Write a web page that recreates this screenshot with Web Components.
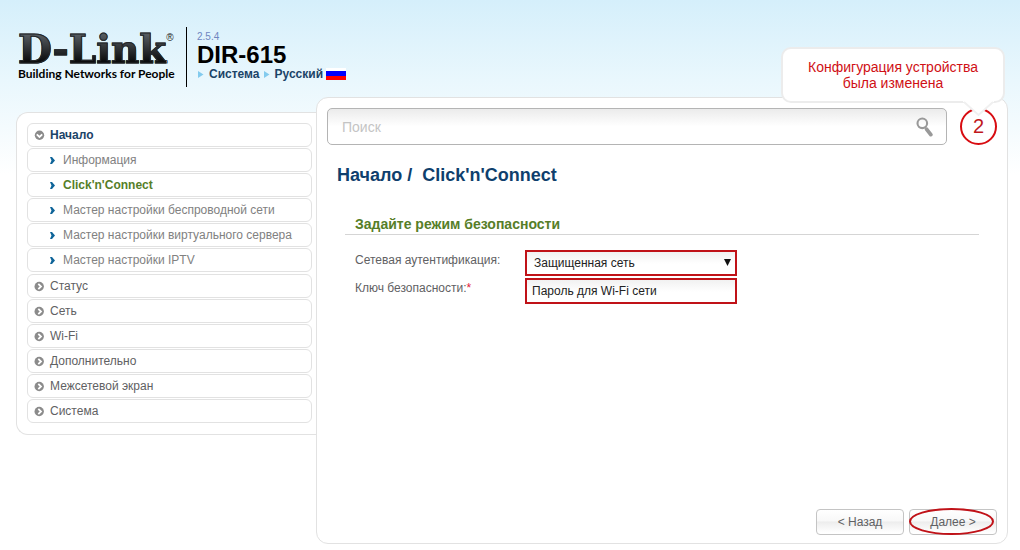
<!DOCTYPE html>
<html lang="ru">
<head>
<meta charset="utf-8">
<title>DIR-615</title>
<style>
html{height:100%}
body{margin:0;min-height:100%;display:flex;flex-direction:column;font:12px/16px "Liberation Sans",Arial,sans-serif;color:#5f6163;background:linear-gradient(#d5effb 0,#e9f7fd 80px,#fff 175px) no-repeat #fff}
</style>
</head>
<body>
<router-app></router-app>
<script>
const define=(name,html,init)=>{
  const t=document.createElement('template');
  t.innerHTML=html;
  customElements.define(name,class extends HTMLElement{
    constructor(){
      super();
      this.attachShadow({mode:'open'}).append(t.content.cloneNode(true));
    }
    connectedCallback(){ if(init) init(this,this.shadowRoot); }
  });
};

define('brand-logo',`
<style>
:host{display:block;width:156px;padding-top:5px;color:#000}
.name{display:flex;font:bold 39px/34px "DejaVu Serif",serif;white-space:nowrap}
.name b{background:linear-gradient(#54595e 10%,#0c0d0e 85%);-webkit-background-clip:text;background-clip:text;color:transparent;-webkit-text-stroke:1px #222528}
sup{font:10px/12px "Liberation Sans",sans-serif;color:#222}
.tag{font:bold 12px/15px Lato,sans-serif;white-space:nowrap}
</style>
<div class="name"><b>D-Link</b><sup>®</sup></div>
<div class="tag">Building Networks for People</div>`);

define('crumb-link',`
<style>
:host{display:flex;align-items:center;gap:5px}
svg{width:7px;height:9px}
a{color:#1b4468;font-weight:bold;text-decoration:none}
</style>
<svg viewBox="0 0 7 9"><path d="M1 1 6.500 4.500 1 8z" fill="#83cbee"/></svg><a href="#"><slot></slot></a>`);

define('ru-flag',`
<style>
:host{display:block;width:20px;height:12px;background:linear-gradient(#fff 25%,#00f 25% 67%,#f00 67%)}
</style>`);

define('app-header',`
<style>
:host{display:flex;gap:12px;padding:27px 18px 0;height:60px}
.info{border-left:1px solid #000;padding-left:10px;color:#000}
.ver{font-size:10px;line-height:14px;padding-top:3px;color:#6f86c0}
h1{margin:0;font-size:24px;line-height:22px}
nav{display:flex;align-items:center;gap:3px}
</style>
<brand-logo></brand-logo>
<div class="info"><div class="ver">2.5.4</div><h1>DIR-615</h1>
<nav><crumb-link>Система</crumb-link><crumb-link>Русский</crumb-link><ru-flag></ru-flag></nav></div>`);

define('menu-item',`
<style>
:host{display:block}
a{display:flex;align-items:center;gap:5px;box-sizing:border-box;height:24px;padding-left:6px;border:1px solid #e2e2e2;border-radius:6px;background:#fff;color:#5f6163;text-decoration:none;white-space:nowrap}
svg{width:11px;height:11px}
.sub{display:none}
:host([level="2"]) a{padding-left:19px;color:#818181}
:host([level="2"]) .top{display:none}
:host([level="2"]) .sub{display:block}
:host([open]) a{color:#1b4468;font-weight:bold}
:host([open]) svg{transform:rotate(90deg)}
:host([current]) a{color:#567e28;font-weight:bold}
</style>
<a href="#"><svg class="top" viewBox="0 0 11 11"><circle cx="5.200" cy="5.500" r="4.700" fill="#8b8b8b"/><path d="M4.300 2.800 7 5.500 4.300 8.200" fill="none" stroke="#fff" stroke-width="1.800"/></svg><svg class="sub" viewBox="0 0 11 11"><path d="M3 2h2l3 3.500-3 3.500H3l1.500-3.500z" fill="#0e6499"/></svg><slot></slot></a>`);

define('side-menu',`
<style>
:host{display:block}
nav{padding:10px 4px 11px 10px;border:1px solid #e2e2e2;border-right:0;border-radius:12px 0 0 12px;background:#fff;display:grid;gap:1px}
.group{display:grid;gap:1px;padding-bottom:1px}
</style>
<nav><div class="group">
<menu-item open>Начало</menu-item>
<menu-item level="2">Информация</menu-item>
<menu-item level="2" current>Click'n'Connect</menu-item>
<menu-item level="2">Мастер настройки беспроводной сети</menu-item>
<menu-item level="2">Мастер настройки виртуального сервера</menu-item>
<menu-item level="2">Мастер настройки IPTV</menu-item></div>
<menu-item>Статус</menu-item><menu-item>Сеть</menu-item><menu-item>Wi-Fi</menu-item>
<menu-item>Дополнительно</menu-item><menu-item>Межсетевой экран</menu-item><menu-item>Система</menu-item>
</nav>`);

define('search-box',`
<style>
:host{display:flex;flex:1;align-items:center;box-sizing:border-box;height:37px;padding:0 12px 0 14px;border:1px solid #b4b4b4;border-radius:5px;background:linear-gradient(#ebebeb,#fff 50%)}
input{flex:1;min-width:0;border:0;padding:0;outline:0;background:none;font:14px/20px "Liberation Sans",Arial,sans-serif}
input::placeholder{color:#c4c4c4;opacity:1}
svg{width:18px;height:20px}
</style>
<input type="search" placeholder="Поиск" aria-label="Поиск"><svg viewBox="0 0 18 20"><circle cx="6.300" cy="6.300" r="4.800" fill="none" stroke="#999" stroke-width="2.100"/><path d="M10.700 12.300 14.800 17.600" stroke="#999" stroke-width="3.800" stroke-linecap="round"/></svg>`);

define('alert-badge',`
<style>
:host{display:block;position:relative}
button{display:block;box-sizing:border-box;width:37px;height:37px;padding:0;border:2px solid #d80c11;border-radius:50%;background:#fff;color:#c0181c;font:20px/33px "Liberation Sans",Arial,sans-serif}
.tip{position:absolute;right:-8px;bottom:42px;width:224px;box-sizing:border-box;padding:10px 0;border:2px solid #ececec;border-radius:10px;background:#fff;color:#d01015;font-size:14px;line-height:16px;text-align:center}
.tip svg{position:absolute;right:9px;top:100%;width:31px;height:16px}
</style>
<button type="button" aria-describedby="tip">2</button>
<div class="tip" id="tip" role="status"><slot></slot><svg viewBox="0 0 31 16"><path d="M0 0 15.500 14 31 0z" fill="#fff" stroke="#fff" stroke-width="1"/><path d="M1 1 15.500 14 30 1" fill="none" stroke="#f0f0f0" stroke-width="2"/></svg></div>`);

define('form-row',`
<style>
:host{display:grid;grid-template-columns:170px 212px;align-items:start}
label{line-height:20px}
i{font-style:normal;color:#e0203a}
select,input{appearance:none;box-sizing:border-box;width:100%;height:26px;margin:0;padding:0 5px;border:2px solid #c01218;border-radius:0;background:linear-gradient(#f1f1f1,#fff 12px);color:#222;font:12px/20px "Liberation Sans",Arial,sans-serif}
select{padding-left:7px}
.ctl{position:relative}
svg{position:absolute;right:6px;top:9px;width:7px;height:7px;pointer-events:none}
</style>
<label for="f"></label><div class="ctl"></div>`,
(el,root)=>{
  const label=root.querySelector('label'),ctl=root.querySelector('.ctl');
  label.textContent=el.getAttribute('label');
  if(el.hasAttribute('required')) label.insertAdjacentHTML('beforeend','<i>*</i>');
  if(el.getAttribute('type')==='select'){
    ctl.innerHTML='<select id="f"><option></option></select><svg viewBox="0 0 7 7"><path d="M0 0h7L3.500 7z" fill="#111"/></svg>';
    ctl.querySelector('option').textContent=el.getAttribute('value');
  }else{
    ctl.innerHTML='<input id="f" type="text">';
    ctl.firstChild.value=el.getAttribute('value');
  }
});

define('form-section',`
<style>
:host{display:block}
h3{margin:0;padding:0 10px;font-size:14px;line-height:20px;color:#567e28;border-bottom:1px solid #d5d5d5}
.rows{display:grid;gap:2px;padding:15px 10px}
</style>
<h3><slot name="title"></slot></h3><div class="rows"><slot></slot></div>`);

define('nav-button',`
<style>
:host{display:block;position:relative}
button{display:block;box-sizing:border-box;width:88px;height:26px;padding:0;border:1px solid #c4c4c4;border-radius:4px;background:linear-gradient(#fff,#f8f8f8 45%,#ededed 50%,#fff 95%);color:#5f6163;font:12px/24px "Liberation Sans",Arial,sans-serif}
svg{display:none;position:absolute;left:0;top:-1px;width:86px;height:27px;pointer-events:none}
:host([marked]) svg{display:block}
</style>
<button type="button"><slot></slot></button><svg viewBox="0 0 86 27"><ellipse cx="42.500" cy="13.500" rx="41.500" ry="12.500" fill="none" stroke="#c01218" stroke-width="2"/></svg>`);

define('content-panel',`
<style>
:host{display:flex;flex-direction:column;box-sizing:border-box;padding:10px 10px 8px;border:1px solid #e2e2e2;border-radius:12px;background:#fff}
.bar{display:flex;gap:13px}
h2{margin:19px 10px 0;font-size:18px;line-height:22px;color:#0f3f6d;white-space:pre}
form-section{margin:28px 18px 0}
footer{display:flex;justify-content:flex-end;gap:5px;margin-top:auto}
</style>
<div class="bar"><search-box></search-box><alert-badge>Конфигурация устройства<br>была изменена</alert-badge></div>
<h2>Начало /  Click'n'Connect</h2>
<form-section><span slot="title">Задайте режим безопасности</span>
<form-row type="select" label="Сетевая аутентификация:" value="Защищенная сеть"></form-row>
<form-row label="Ключ безопасности:" required value="Пароль для Wi-Fi сети"></form-row></form-section>
<footer><nav-button>&lt; Назад</nav-button><nav-button marked>Далее &gt;</nav-button></footer>`);

define('router-app',`
<style>
:host{flex:1;display:flex;flex-direction:column}
main{flex:1;display:grid;grid-template-columns:300px minmax(0,1fr);margin:10px 12px 6px 16px}
side-menu{margin-top:15px}
</style>
<app-header></app-header>
<main><side-menu></side-menu><content-panel></content-panel></main>`);
</script>
</body>
</html>
